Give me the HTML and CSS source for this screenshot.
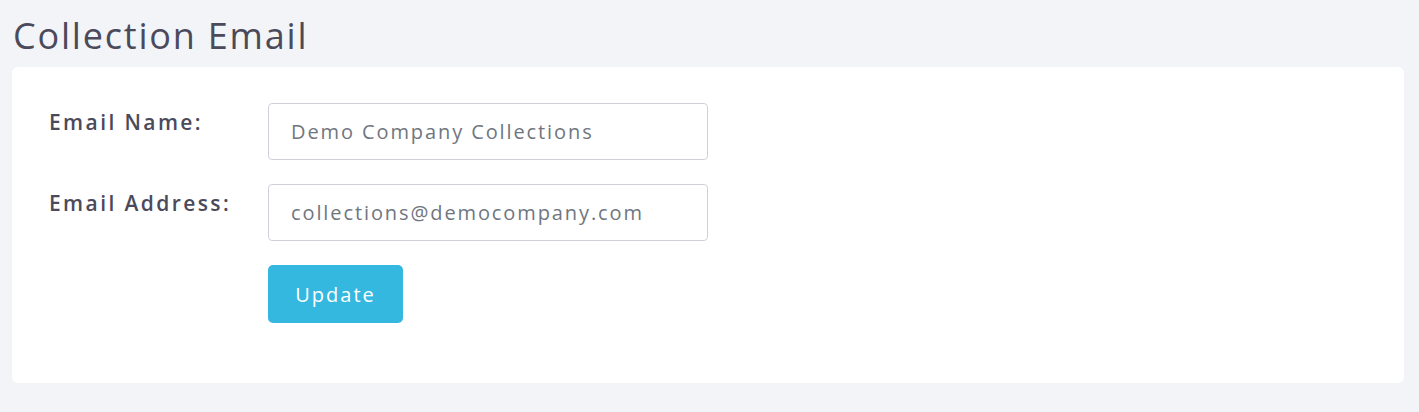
FILE: index.html
```html
<!DOCTYPE html>
<html lang="en">
  <head>
    <meta charset="UTF-8">
    <title>Collection Email</title>
    <link rel="stylesheet" href="styles.css">
  </head>
  <body>
    <main class="page">
      <h1 class="page-title">Collection Email</h1>
      <form class="card" action="#" method="POST">
        <div class="form-row">
          <label for="email-name">Email Name:</label>
          <input id="email-name" type="text" value="Demo Company Collections">
        </div>
        <div class="form-row">
          <label for="email-address">Email Address:</label>
          <input id="email-address" type="email" value="collections@democompany.com">
        </div>
        <div class="form-row">
          <span class="spacer"></span>
          <button type="submit">Update</button>
        </div>
      </form>
    </main>
  </body>
</html>
```

FILE: styles.css
```css
body {
  margin: 0;
  background: #f3f4f7;
  font-family: "Open Sans", "Liberation Sans", sans-serif;
  color: #4a4a5a;
}
.page {
  padding: 14px 15px 29px 12px;
}
.page-title {
  margin: 0 0 9px 1px;
  font-size: 36px;
  font-weight: 400;
  line-height: 44px;
  letter-spacing: 1.8px;
  color: #4b4a5b;
}
.card {
  background: #fff;
  border-radius: 6px;
  padding: 36px 37px 60px;
  display: flex;
  flex-direction: column;
  gap: 24px;
}
.form-row {
  display: flex;
  align-items: flex-start;
}
.form-row label,
.spacer {
  width: 219px;
  flex-shrink: 0;
}
.form-row label {
  padding-top: 5px;
  font-size: 21px;
  font-weight: 600;
  line-height: 28px;
  letter-spacing: 2.4px;
  color: #4b4a5b;
}
.form-row input {
  box-sizing: border-box;
  width: 440px;
  height: 57px;
  padding: 0 22px;
  border: 1px solid #cfd3d9;
  border-radius: 4px;
  font: inherit;
  font-size: 20px;
  letter-spacing: 1.9px;
  color: #707680;
  outline: none;
}
.form-row button {
  width: 135px;
  height: 58px;
  border: 0;
  border-radius: 5px;
  background: #35b8e0;
  color: #fff;
  font: inherit;
  font-size: 20px;
  letter-spacing: 2px;
}
```
